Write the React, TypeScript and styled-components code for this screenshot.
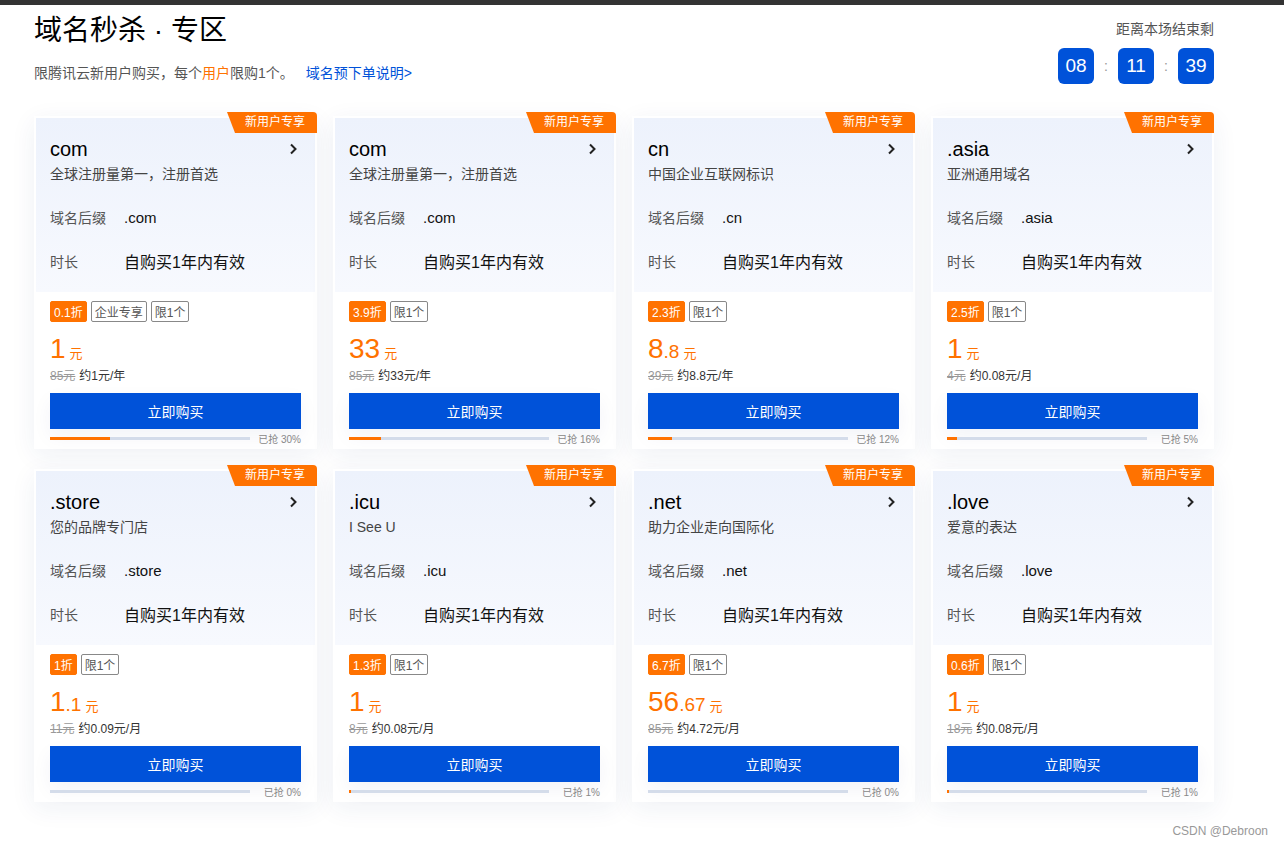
import React from "react";
import styled, { createGlobalStyle } from "styled-components";

const Global = createGlobalStyle`
  html, body { margin: 0; padding: 0; background: #fff; }
  body { font-family: "Liberation Sans", Arial, "Noto Sans CJK SC", sans-serif; color: #000; }
  * { box-sizing: border-box; }
`;

const TopBar = styled.div`
  height: 5px;
  background: #333333;
`;

const Page = styled.div`
  width: 1180px;
  margin-left: 34px;
`;

const Header = styled.header`
  display: flex;
  justify-content: space-between;
  align-items: flex-start;
  padding-top: 8px;
`;

const HeadLeft = styled.div`
  display: flex;
  flex-direction: column;
`;

const Title = styled.h1`
  margin: 0;
  font-size: 28px;
  line-height: 36px;
  font-weight: 400;
  color: #000;
`;

const Sub = styled.p`
  margin: 15px 0 0;
  font-size: 14px;
  line-height: 18px;
  color: #555;
`;

const Hl = styled.span`
  color: #ff7200;
`;

const Link = styled.a`
  margin-left: 12px;
  color: #0052d9;
  text-decoration: none;
`;

const Timer = styled.div`
  display: flex;
  flex-direction: column;
  align-items: flex-end;
  padding-top: 7px;
`;

const TimerLabel = styled.div`
  font-size: 14px;
  line-height: 18px;
  color: #555;
`;

const Clock = styled.div`
  display: flex;
  align-items: center;
  margin-top: 10px;
`;

const Digit = styled.div`
  width: 36px;
  height: 36px;
  border-radius: 6px;
  background: #0052d9;
  color: #fff;
  font-size: 19px;
  display: flex;
  align-items: center;
  justify-content: center;
`;

const Colon = styled.span`
  width: 24px;
  text-align: center;
  color: #999;
  font-size: 14px;
`;

const Grid = styled.div`
  display: grid;
  grid-template-columns: repeat(4, 283px);
  column-gap: 16px;
  row-gap: 20px;
  margin-top: 32px;
`;

const Card = styled.div`
  position: relative;
  background: #fff;
  padding: 2px 2px 0;
  box-shadow: 0 6px 24px rgba(30, 60, 120, 0.07);
`;

const Badge = styled.div`
  position: absolute;
  top: -4px;
  right: 0;
  width: 90px;
  height: 21px;
  background: #ff7200;
  color: #fff;
  font-size: 12px;
  line-height: 21px;
  padding-left: 18px;
  border-top-right-radius: 4px;
  clip-path: polygon(0 0, 100% 0, 100% 100%, 8px 100%);
`;

const Top = styled.div`
  height: 174px;
  padding: 17px 14px 9px 14px;
  background: linear-gradient(180deg, #edf2fc 0%, #f7f9fe 100%);
`;

const NameRow = styled.div`
  display: flex;
  justify-content: space-between;
  align-items: center;
  height: 28px;
  padding-right: 3px;
`;

const Name = styled.div`
  font-size: 20px;
  line-height: 28px;
  color: #000;
`;

const Desc = styled.div`
  margin-top: 2px;
  font-size: 14px;
  line-height: 18px;
  color: #444;
`;

const Info = styled.div`
  display: flex;
  flex-direction: column;
  margin-top: 12px;
`;

const InfoRow = styled.div`
  display: flex;
  align-items: center;
  height: 44px;
`;

const Label = styled.span`
  width: 74px;
  font-size: 14px;
  color: #555;
`;

const Value = styled.span<{ $big?: boolean }>`
  font-size: ${(p) => (p.$big ? "16px" : "15px")};
  color: #111;
`;

const Bottom = styled.div`
  padding: 9px 14px 4px;
  display: flex;
  flex-direction: column;
`;

const Tags = styled.div`
  display: flex;
  gap: 4px;
  height: 21px;
`;

const Tag = styled.span<{ $hot?: boolean }>`
  display: inline-flex;
  align-items: center;
  height: 21px;
  padding: 0 3px;
  font-size: 12px;
  border-radius: 2px;
  color: ${(p) => (p.$hot ? "#fff" : "#555")};
  background: ${(p) => (p.$hot ? "#ff7200" : "#fff")};
  border: 1px solid ${(p) => (p.$hot ? "#ff7200" : "#888")};
`;

const PriceRow = styled.div`
  display: flex;
  align-items: baseline;
  height: 32px;
  margin-top: 10px;
  color: #ff7200;
`;

const Int = styled.span`
  font-size: 28px;
  line-height: 33px;
`;

const Dec = styled.span`
  font-size: 19px;
`;

const Unit = styled.span`
  font-size: 13px;
  margin-left: 4px;
`;

const Orig = styled.div`
  margin-top: 4px;
  font-size: 12px;
  line-height: 16px;
  color: #333;
`;

const Strike = styled.s`
  color: #999;
  margin-right: 4px;
`;

const Buy = styled.button`
  margin-top: 9px;
  height: 36px;
  width: 100%;
  border: 0;
  background: #0052d9;
  color: #fff;
  font-family: inherit;
  font-size: 14px;
  cursor: pointer;
  box-shadow: 0 8px 20px rgba(0, 40, 120, 0.05);
`;

const Progress = styled.div`
  margin-top: 2px;
  height: 14px;
  display: flex;
  align-items: center;
  justify-content: space-between;
`;

const Track = styled.div`
  width: 200px;
  height: 3px;
  background: #d4dcea;
  overflow: hidden;
`;

const Fill = styled.div`
  height: 100%;
  background: #ff7200;
`;

const Sold = styled.span`
  font-size: 10px;
  color: #888;
`;

const Footer = styled.div`
  display: flex;
  justify-content: flex-end;
  padding: 22px 16px 10px 0;
  font-size: 12px;
  color: #999;
`;

const Chevron = () => (
  <svg width="10" height="12" viewBox="0 0 10 12" fill="none">
    <path d="M3 1.5 L7.5 6 L3 10.5" stroke="#222" strokeWidth="2" strokeLinejoin="miter" />
  </svg>
);

type Item = {
  name: string;
  desc: string;
  suffix: string;
  tags: string[];
  int: string;
  dec?: string;
  orig: string;
  per: string;
  pct: number;
};

const items: Item[] = [
  { name: "com", desc: "全球注册量第一，注册首选", suffix: ".com", tags: ["0.1折", "企业专享", "限1个"], int: "1", orig: "85元", per: "约1元/年", pct: 30 },
  { name: "com", desc: "全球注册量第一，注册首选", suffix: ".com", tags: ["3.9折", "限1个"], int: "33", orig: "85元", per: "约33元/年", pct: 16 },
  { name: "cn", desc: "中国企业互联网标识", suffix: ".cn", tags: ["2.3折", "限1个"], int: "8", dec: ".8", orig: "39元", per: "约8.8元/年", pct: 12 },
  { name: ".asia", desc: "亚洲通用域名", suffix: ".asia", tags: ["2.5折", "限1个"], int: "1", orig: "4元", per: "约0.08元/月", pct: 5 },
  { name: ".store", desc: "您的品牌专门店", suffix: ".store", tags: ["1折", "限1个"], int: "1", dec: ".1", orig: "11元", per: "约0.09元/月", pct: 0 },
  { name: ".icu", desc: "I See U", suffix: ".icu", tags: ["1.3折", "限1个"], int: "1", orig: "8元", per: "约0.08元/月", pct: 1 },
  { name: ".net", desc: "助力企业走向国际化", suffix: ".net", tags: ["6.7折", "限1个"], int: "56", dec: ".67", orig: "85元", per: "约4.72元/月", pct: 0 },
  { name: ".love", desc: "爱意的表达", suffix: ".love", tags: ["0.6折", "限1个"], int: "1", orig: "18元", per: "约0.08元/月", pct: 1 },
];

const DomainCard = ({ it }: { it: Item }) => (
  <Card>
    <Badge>新用户专享</Badge>
    <Top>
      <NameRow>
        <Name>{it.name}</Name>
        <Chevron />
      </NameRow>
      <Desc>{it.desc}</Desc>
      <Info>
        <InfoRow>
          <Label>域名后缀</Label>
          <Value>{it.suffix}</Value>
        </InfoRow>
        <InfoRow>
          <Label>时长</Label>
          <Value $big>自购买1年内有效</Value>
        </InfoRow>
      </Info>
    </Top>
    <Bottom>
      <Tags>
        {it.tags.map((t, i) => (
          <Tag key={t} $hot={i === 0}>
            {t}
          </Tag>
        ))}
      </Tags>
      <PriceRow>
        <Int>{it.int}</Int>
        {it.dec && <Dec>{it.dec}</Dec>}
        <Unit>元</Unit>
      </PriceRow>
      <Orig>
        <Strike>{it.orig}</Strike>
        {it.per}
      </Orig>
      <Buy>立即购买</Buy>
      <Progress>
        <Track>
          <Fill style={{ width: `${it.pct}%` }} />
        </Track>
        <Sold>已抢 {it.pct}%</Sold>
      </Progress>
    </Bottom>
  </Card>
);

export default function App() {
  return (
    <>
      <Global />
      <TopBar />
      <Page>
        <Header>
          <HeadLeft>
            <Title>域名秒杀 · 专区</Title>
            <Sub>
              限腾讯云新用户购买，每个<Hl>用户</Hl>限购1个。
              <Link href="#">域名预下单说明&gt;</Link>
            </Sub>
          </HeadLeft>
          <Timer>
            <TimerLabel>距离本场结束剩</TimerLabel>
            <Clock>
              <Digit>08</Digit>
              <Colon>:</Colon>
              <Digit>11</Digit>
              <Colon>:</Colon>
              <Digit>39</Digit>
            </Clock>
          </Timer>
        </Header>
        <Grid>
          {items.map((it, i) => (
            <DomainCard key={i} it={it} />
          ))}
        </Grid>
      </Page>
      <Footer>CSDN @Debroon</Footer>
    </>
  );
}
